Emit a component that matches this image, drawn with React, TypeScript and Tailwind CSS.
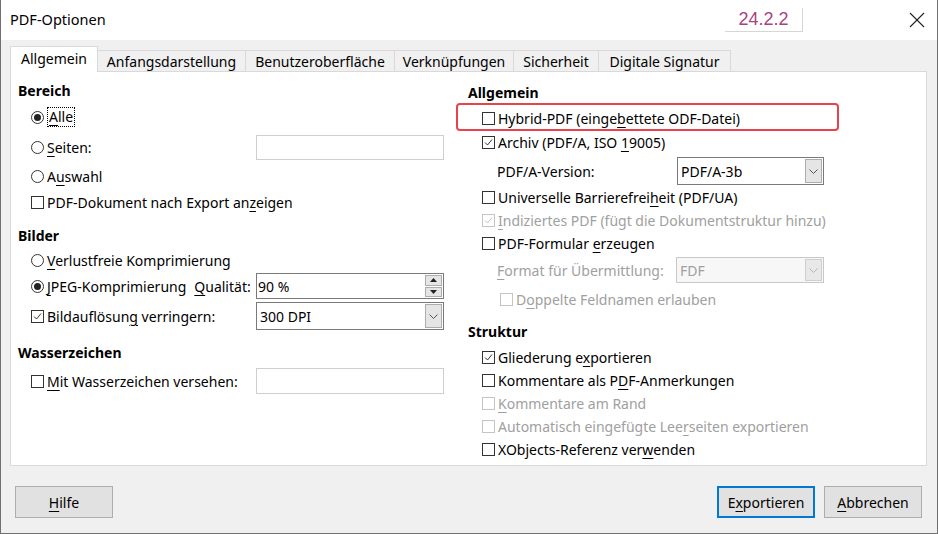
import React from 'react';

const font = {fontFamily: '"Noto Sans", "Open Sans", sans-serif'};

function U({children}: {children: React.ReactNode}) {
  return <span className="underline decoration-1 underline-offset-[3px]">{children}</span>;
}

function CheckBox({checked, disabled}: {checked?: boolean; disabled?: boolean}) {
  return (
    <span
      className={
        'flex h-[13px] w-[13px] shrink-0 items-center justify-center border bg-white ' +
        (disabled ? 'border-[#c4c4c4]' : 'border-[#333333]')
      }
    >
      {checked && (
        <svg width="9" height="9" viewBox="0 0 9 9">
          <polyline
            points="1,4.5 3.5,7 8,1.5"
            fill="none"
            stroke={disabled ? '#c4c4c4' : '#333333'}
            strokeWidth="1"
          />
        </svg>
      )}
    </span>
  );
}

function Radio({checked}: {checked?: boolean}) {
  return (
    <span className="flex h-[13px] w-[13px] shrink-0 items-center justify-center rounded-full border border-[#333333] bg-white">
      {checked && <span className="h-[7px] w-[7px] rounded-full bg-[#222222]" />}
    </span>
  );
}

function Chevron({color = '#555555'}: {color?: string}) {
  return (
    <svg width="9" height="5" viewBox="0 0 9 5">
      <polyline points="0.5,0.5 4.5,4.5 8.5,0.5" fill="none" stroke={color} strokeWidth="1" />
    </svg>
  );
}

function Select({value, width, height = 'h-[27px]', disabled}: {value: string; width: string; height?: string; disabled?: boolean}) {
  return (
    <div
      className={
        'flex items-stretch border ' +
        width +
        ' ' +
        height +
        (disabled ? ' border-[#c8c8c8] bg-[#f7f7f7] text-[#a0a0a0]' : ' border-[#7a7a7a] bg-white')
      }
    >
      <span className="flex flex-1 items-center pl-[3px]">{value}</span>
      <span
        className={
          'm-px flex w-[17px] items-center justify-center border ' +
          (disabled ? 'border-[#cfcfcf] bg-[#e8e8e8]' : 'border-[#adadad] bg-[#e5e5e5]')
        }
      >
        <Chevron color={disabled ? '#b5b5b5' : '#555555'} />
      </span>
    </div>
  );
}

function Heading({children, className = ''}: {children: React.ReactNode; className?: string}) {
  return <div className={'flex h-[22px] items-center font-bold ' + className}>{children}</div>;
}

function CheckRow({
  children,
  checked,
  disabled,
  className = '',
}: {
  children: React.ReactNode;
  checked?: boolean;
  disabled?: boolean;
  className?: string;
}) {
  return (
    <div className={'flex items-center gap-[3px] ' + (disabled ? 'text-[#a0a0a0] ' : '') + className}>
      <CheckBox checked={checked} disabled={disabled} />
      <span>{children}</span>
    </div>
  );
}

function RadioRow({children, checked}: {children: React.ReactNode; checked?: boolean}) {
  return (
    <div className="flex items-center gap-[3px]">
      <Radio checked={checked} />
      <span>{children}</span>
    </div>
  );
}

const tabs = [
  {label: 'Anfangsdarstellung', w: 'w-[148px]'},
  {label: 'Benutzeroberfläche', w: 'w-[149px]'},
  {label: 'Verknüpfungen', w: 'w-[119px]'},
  {label: 'Sicherheit', w: 'w-[85px]'},
  {label: 'Digitale Signatur', w: 'w-[132px]'},
];

function Button({children, focused, className = ''}: {children: React.ReactNode; focused?: boolean; className?: string}) {
  return (
    <div
      className={
        'flex h-[32px] w-[98px] items-center justify-center bg-[#e1e1e1] ' +
        (focused ? 'border-2 border-[#0078d7]' : 'border border-[#adadad]') +
        ' ' +
        className
      }
    >
      {children}
    </div>
  );
}

export default function App() {
  return (
    <div
      style={font}
      className="flex h-[534px] w-[938px] flex-col border-x border-b border-[#707070] bg-[#f0f0f0] text-[14px] text-black"
    >
      {/* title bar */}
      <div className="flex h-[40px] shrink-0 items-center bg-white">
        <span className="ml-[9px] text-[14.5px]">PDF-Optionen</span>
        <div
          className="ml-auto mr-[106px] flex h-[24px] w-[78px] items-center justify-center border-b border-r border-[#d6d6d6] text-[18px] text-[#a8437f]"
          style={{fontFamily: '"Liberation Sans", Arial, sans-serif'}}
        >
          24.2.2
        </div>
        <svg className="mr-[12px]" width="16" height="16" viewBox="0 0 16 16">
          <line x1="1" y1="1" x2="15" y2="15" stroke="#222" strokeWidth="1.1" />
          <line x1="15" y1="1" x2="1" y2="15" stroke="#222" strokeWidth="1.1" />
        </svg>
      </div>

      {/* tabs */}
      <div className="ml-[9px] mt-[6px] flex h-[25px] items-end">
        <div className="relative z-10 -mb-px flex h-[26px] w-[88px] items-center justify-center border-x border-t border-[#d9d9d9] bg-white pb-[2px]">
          Allgemein
        </div>
        {tabs.map(t => (
          <div
            key={t.label}
            className={'flex h-[21px] items-center justify-center border-r border-t border-[#d9d9d9] bg-[#f0f0f0] ' + t.w}
          >
            {t.label}
          </div>
        ))}
      </div>

      {/* panel */}
      <div className="ml-[9px] flex h-[395px] w-[917px] border border-[#d9d9d9] bg-white pt-[7px]">
        {/* left column */}
        <div className="ml-[7px] flex w-[426px] flex-col">
          <Heading>Bereich</Heading>
          <div className="mt-[3px] flex h-[26px] items-center pl-[13px]">
            <div className="flex items-center gap-[3px]">
              <Radio checked />
              <span className="border border-dotted border-black px-px leading-[18px]">
                <U>A</U>lle
              </span>
            </div>
          </div>
          <div className="mt-[4px] flex h-[26px] items-center">
            <div className="w-[238px] pl-[13px]">
              <RadioRow>
                <U>S</U>eiten:
              </RadioRow>
            </div>
            <div className="h-[25px] w-[188px] border border-[#cfcfcf] bg-white" />
          </div>
          <div className="mt-[3px] flex h-[26px] items-center pl-[13px]">
            <RadioRow>
              A<U>u</U>swahl
            </RadioRow>
          </div>
          <div className="mt-[1px] flex h-[24px] items-center pl-[13px]">
            <CheckRow>
              PDF-Dokument nach Export an<U>z</U>eigen
            </CheckRow>
          </div>

          <Heading className="mt-[10px]">Bilder</Heading>
          <div className="mt-[2px] flex h-[24px] items-center pl-[13px]">
            <RadioRow>
              <U>V</U>erlustfreie Komprimierung
            </RadioRow>
          </div>
          <div className="mt-[1px] flex h-[26px] items-center">
            <div className="flex w-[238px] items-center gap-[8px] pl-[13px]">
              <RadioRow checked>
                <U>J</U>PEG-Komprimierung
              </RadioRow>
              <span>
                <U>Q</U>ualität:
              </span>
            </div>
            <div className="flex h-[26px] w-[188px] items-stretch border border-[#7a7a7a] bg-white">
              <span className="flex flex-1 items-center pl-[1px]">90 %</span>
              <div className="my-px mr-px flex w-[17px] flex-col gap-px">
                <span className="flex flex-1 items-center justify-center border border-[#adadad] bg-[#e5e5e5]">
                  <svg width="7" height="4" viewBox="0 0 7 4">
                    <polygon points="0,4 3.5,0 7,4" fill="#222" />
                  </svg>
                </span>
                <span className="flex flex-1 items-center justify-center border border-[#adadad] bg-[#e5e5e5]">
                  <svg width="7" height="4" viewBox="0 0 7 4">
                    <polygon points="0,0 3.5,4 7,0" fill="#222" />
                  </svg>
                </span>
              </div>
            </div>
          </div>
          <div className="mt-[3px] flex h-[28px] items-center">
            <div className="w-[238px] pl-[13px]">
              <CheckRow checked>
                Bildauflösun<U>g</U> verringern:
              </CheckRow>
            </div>
            <Select value="300 DPI" width="w-[188px]" height="h-[28px]" />
          </div>

          <Heading className="mt-[11px]">Wasserzeichen</Heading>
          <div className="mt-[5px] flex h-[26px] items-center">
            <div className="w-[238px] pl-[13px]">
              <CheckRow>
                <U>M</U>it Wasserzeichen versehen:
              </CheckRow>
            </div>
            <div className="h-[26px] w-[188px] border border-[#cfcfcf] bg-white" />
          </div>
        </div>

        {/* right column */}
        <div className="ml-[24px] flex w-[420px] flex-col">
          <Heading className="mt-[2px]">Allgemein</Heading>
          <div className="-ml-[12px] flex h-[28px] w-[383px] items-center rounded-[4px] border-2 border-[#e8434b] pl-[24px] pt-[2px]">
            <CheckRow>
              Hybrid-PDF (einge<U>b</U>ettete ODF-Datei)
            </CheckRow>
          </div>
          <CheckRow checked className="h-[23px] pl-[14px]">
            Archiv (PDF/A, ISO <U>1</U>9005)
          </CheckRow>
          <div className="mt-[3px] flex h-[28px] items-center">
            <span className="w-[209px] pl-[29px]">PDF/A-Version:</span>
            <Select value="PDF/A-3b" width="w-[147px]" height="h-[28px]" />
          </div>
          <CheckRow className="h-[24px] pl-[14px]">
            Universelle Barrierefrei<U>h</U>eit (PDF/UA)
          </CheckRow>
          <CheckRow checked disabled className="h-[23px] pl-[14px]">
            <U>I</U>ndiziertes PDF (fügt die Dokumentstruktur hinzu)
          </CheckRow>
          <CheckRow className="h-[23px] pl-[14px]">
            PDF-Formular <U>e</U>rzeugen
          </CheckRow>
          <div className="mt-[2px] flex h-[26px] items-center">
            <span className="w-[208px] pl-[29px] text-[#a0a0a0]">
              <U>F</U>ormat für Übermittlung:
            </span>
            <Select value="FDF" width="w-[148px]" height="h-[26px]" disabled />
          </div>
          <CheckRow disabled className="mt-[3px] h-[26px] pl-[32px]">
            D<U>o</U>ppelte Feldnamen erlauben
          </CheckRow>

          <Heading className="mt-[8px]">Struktur</Heading>
          <CheckRow checked className="mt-[3px] h-[24px] pl-[14px]">
            Gliederung e<U>x</U>portieren
          </CheckRow>
          <CheckRow className="h-[23px] pl-[14px]">
            Kommentare als P<U>D</U>F-Anmerkungen
          </CheckRow>
          <CheckRow disabled className="h-[23px] pl-[14px]">
            <U>K</U>ommentare am Rand
          </CheckRow>
          <CheckRow disabled className="h-[23px] pl-[14px]">
            Automatisch eingefügte Lee<U>r</U>seiten exportieren
          </CheckRow>
          <CheckRow className="h-[23px] pl-[14px]">
            XObjects-Referenz ver<U>w</U>enden
          </CheckRow>
        </div>
      </div>

      {/* buttons */}
      <div className="mt-[20px] flex items-center">
        <Button className="ml-[14px]">
          <span>
            <U>H</U>ilfe
          </span>
        </Button>
        <Button focused className="ml-auto">
          <span>
            E<U>x</U>portieren
          </span>
        </Button>
        <Button className="ml-[9px] mr-[15px]">
          <span>
            <U>A</U>bbrechen
          </span>
        </Button>
      </div>
    </div>
  );
}
